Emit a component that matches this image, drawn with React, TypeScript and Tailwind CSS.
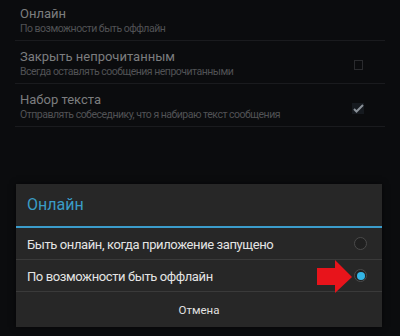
import React from 'react';

const PREFS = [
  { title: 'Онлайн', sub: 'По возможности быть оффлайн', control: 'none' },
  { title: 'Закрыть непрочитанным', sub: 'Всегда оставлять сообщения непрочитанными', control: 'box' },
  { title: 'Набор текста', sub: 'Отправлять собеседнику, что я набираю текст сообщения', control: 'check' },
];

const OPTIONS = [
  { label: 'Быть онлайн, когда приложение запущено', checked: false },
  { label: 'По возможности быть оффлайн', checked: true },
];

function Radio({ checked }: { checked: boolean }) {
  return (
    <span className="flex h-[13px] w-[13px] items-center justify-center rounded-full border-[1.5px] border-[#4a4a4a] bg-[#202020]">
      {checked && <span className="h-[8px] w-[8px] rounded-full bg-[#33b5e5]" />}
    </span>
  );
}

export default function App() {
  return (
    <div
      className="relative h-[336px] w-[400px] overflow-hidden bg-[#0b0c0e]"
      style={{ fontFamily: 'Roboto, "Noto Sans", sans-serif' }}
    >
      <div className="-mt-[2px] px-[15px]">
        {PREFS.map((p) => (
          <div key={p.title} className="flex items-center border-b border-[#1a1b1e] pt-[8px] pb-[4px]">
            <div className="flex-1 pl-[5px]">
              <div className="text-[13px] leading-[16px] text-[#7c7d7f]">{p.title}</div>
              <div className="text-[10.5px] leading-[14px] tracking-[-0.5px] text-[#515255]">{p.sub}</div>
            </div>
            <div className="mr-[20px] flex w-[14px] justify-center">
              {p.control === 'box' && (
                <span className="mt-[2px] h-[10px] w-[9px] border border-[#2a2b2e]" />
              )}
              {p.control === 'check' && (
                <svg width="14" height="13" viewBox="0 0 14 13" className="mt-[2px]">
                  <rect x="1" y="1" width="12" height="11" fill="#161a1f" />
                  <path d="M3 7 L5.5 9.5 L12 3" stroke="#8a9198" strokeWidth="2" fill="none" />
                </svg>
              )}
            </div>
          </div>
        ))}
      </div>

      <div className="absolute left-[16px] top-[184px] w-[366px] bg-[#272727] shadow-[0_0_6px_rgba(0,0,0,0.6)]">
        <div className="flex h-[42px] items-center pl-[11px] text-[16px] text-[#3a9cc6]">Онлайн</div>
        <div className="h-[2px] bg-[#3b9ccb]" />
        {OPTIONS.map((o) => (
          <div key={o.label} className="flex h-[32px] items-center border-b border-[#3a3a3a] pl-[11px] pr-[15px]">
            <span className="flex-1 pt-[3px] text-[13px] tracking-[-0.4px] text-[#e4e4e4]">{o.label}</span>
            <Radio checked={o.checked} />
          </div>
        ))}
        <div className="flex h-[35px] items-center justify-center pt-[3px] text-[11.5px] text-[#e0e0e0]">Отмена</div>
      </div>

      <svg className="absolute left-[316px] top-[259px]" width="38" height="35" viewBox="0 0 38 35">
        <polygon points="1,9 19,9 19,1 36,18 19,34 19,26 1,26" fill="#e8141b" />
      </svg>
    </div>
  );
}
